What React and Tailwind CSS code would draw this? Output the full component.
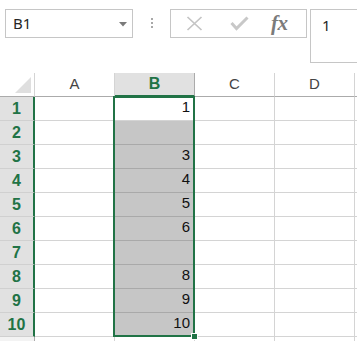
import React from "react";

const COLS = ["A", "B", "C", "D", ""];
const VALUES = { 1: "1", 3: "3", 4: "4", 5: "5", 6: "6", 8: "8", 9: "9", 10: "10" };
const ROWS = [1, 2, 3, 4, 5, 6, 7, 8, 9, 10, 11];

function NameBox() {
  return (
    <div className="relative shrink-0 w-[128px] h-[29px] border border-[#c6c6c6] bg-white flex items-center pl-[7px]">
      <span className="text-[15px] text-[#262626] font-['Noto_Sans',sans-serif]">B1</span>
      <svg className="absolute left-[113px] top-[12px]" width="8" height="5" viewBox="0 0 8 5">
        <path d="M0 0h8L4 4.5z" fill="#7a7a7a" />
      </svg>
    </div>
  );
}

function FormulaButtons() {
  return (
    <div className="shrink-0 w-[137px] h-[29px] border border-[#c6c6c6] bg-white flex items-center">
      <svg className="ml-[15px]" width="17" height="15" viewBox="0 0 17 15">
        <path d="M1.5 1l14 13M15.5 1l-14 13" stroke="#c4c4c4" strokeWidth="1.7" fill="none" />
      </svg>
      <svg className="ml-[27px]" width="19" height="15" viewBox="0 0 19 15">
        <path d="M1.5 7l5 5.5L17.5 1.5" stroke="#c8c8c8" strokeWidth="3" fill="none" />
      </svg>
      <span className="ml-[22px] text-[21px] italic font-semibold text-[#7b7b7b] font-['Liberation_Serif',serif] leading-none tracking-[-0.5px]">
        fx
      </span>
    </div>
  );
}

export default function App() {
  return (
    <div className="w-[357px] h-[341px] overflow-hidden bg-white relative font-['Liberation_Sans',sans-serif]">
      <div className="h-[73px] w-[420px] flex items-start pt-[9px] pl-[5px]">
        <NameBox />
        <div className="shrink-0 w-[37px] flex flex-col items-center gap-[2px] pt-[9px]">
          <div className="w-[2px] h-[2px] bg-[#a8a8a8]" />
          <div className="w-[2px] h-[2px] bg-[#a8a8a8]" />
          <div className="w-[2px] h-[2px] bg-[#a8a8a8]" />
        </div>
        <FormulaButtons />
        <div className="shrink-0 ml-[3px] w-[80px] h-[54px] border border-[#c6c6c6] bg-white pl-[11px] pt-[4px]">
          <span className="text-[15px] text-[#262626] font-['Noto_Sans',sans-serif]">1</span>
        </div>
      </div>

      <div className="relative">
        <div className="grid grid-cols-[35px_80px_80px_80px_80px_80px] w-[435px]">
          <div className="h-[24px] relative border-b border-[#ababab] border-r border-r-[#d4d4d4]">
            <svg className="absolute left-[15px] top-[4px]" width="16" height="16" viewBox="0 0 16 16">
              <path d="M16 0V16H0z" fill="#dfdfdf" />
            </svg>
          </div>
          {COLS.map((c, i) =>
            c === "B" ? (
              <div
                key={i}
                className="h-[24px] bg-[#e1e1e1] border-b-2 border-[#217346] border-r border-r-[#ababab] flex items-center justify-center text-[16px] font-bold text-[#217346]"
              >
                {c}
              </div>
            ) : (
              <div
                key={i}
                className="h-[24px] border-b border-[#ababab] border-r border-r-[#d4d4d4] flex items-center justify-center text-[15px] text-[#444]"
              >
                {c}
              </div>
            )
          )}

          {ROWS.map((r) => (
            <React.Fragment key={r}>
              <div
                className={
                  r <= 10
                    ? "h-[24px] bg-[#e1e1e1] border-b border-[#d0d0d0] border-r-2 border-r-[#217346] flex items-center justify-center text-[16px] font-bold text-[#217346]"
                    : "h-[24px] bg-[#f3f3f3] border-b border-[#d4d4d4] border-r border-r-[#ababab]"
                }
              >
                {r <= 10 ? r : ""}
              </div>
              {COLS.map((c, i) => {
                const sel = c === "B" && r >= 2 && r <= 10;
                return (
                  <div
                    key={i}
                    className={
                      sel
                        ? "h-[24px] bg-[#c6c6c6] border-b border-[#a9a9a9] border-r border-r-[#d4d4d4] flex items-end justify-end pr-[4px] pb-[2px] text-[15px] text-[#111]"
                        : "h-[24px] bg-white border-b border-[#d4d4d4] border-r border-r-[#d4d4d4] flex items-end justify-end pr-[4px] pb-[2px] text-[15px] text-[#111]"
                    }
                  >
                    {c === "B" ? VALUES[r] : ""}
                  </div>
                );
              })}
            </React.Fragment>
          ))}
        </div>

        <div className="absolute left-[113px] top-[23px] w-[82px] h-[241px] border-2 border-[#217346] pointer-events-none" />
        <div className="absolute left-[191px] top-[260px] w-[7px] h-[7px] bg-[#217346] border border-white" />
      </div>
    </div>
  );
}
